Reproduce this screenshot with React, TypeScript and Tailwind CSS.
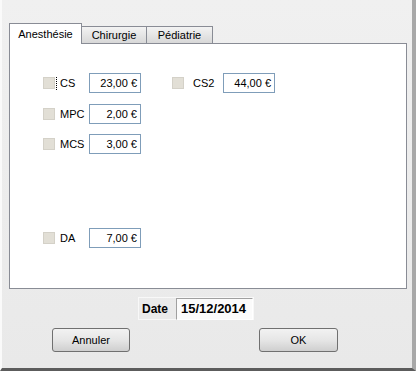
import * as React from "react"

const font = { fontFamily: '"Liberation Sans", Arial, sans-serif' }

function Check({ focused }: { focused?: boolean }) {
  return (
    <div className="flex items-center">
      <div className="w-[12px] h-[12px] border border-[#d4d1c8] bg-[#e2dfd6]" />
      {focused && <div className="w-px h-[13px] ml-px border-l border-dotted border-black" />}
    </div>
  )
}

function Amount({ value }: { value: string }) {
  return (
    <div className="w-[52px] h-[20px] border border-[#7f9db9] bg-white text-right pr-[3px] leading-[18px] text-[11px] text-black">
      {value}
    </div>
  )
}

function Row({
  label,
  value,
  focused,
  className = "",
  children,
}: {
  label: string
  value: string
  focused?: boolean
  className?: string
  children?: React.ReactNode
}) {
  return (
    <div className={`flex items-center h-[20px] ${className}`}>
      <div className="w-[12px] flex items-center">
        <Check focused={focused} />
      </div>
      <div className="ml-[5px] w-[29px] text-[11px] text-black">{label}</div>
      <Amount value={value} />
      {children}
    </div>
  )
}

export default function App() {
  return (
    <div
      style={font}
      className="w-[416px] h-[371px] flex flex-col bg-gradient-to-b from-[#f0f0f0] to-[#e9e9e9] border-l-2 border-l-[#fafafa] border-r-4 border-r-[#a8a8a8] border-b-[3px] border-b-[#5c5c5c] select-none"
    >
      {/* Tabs */}
      <div className="flex items-end h-[20px] mt-[23px] ml-[7px]">
        <div className="relative z-10 -mb-px w-[73px] h-[21px] border-l border-t border-r border-[#898c95] bg-white flex items-center justify-center text-[11px] text-black">
          Anesthésie
        </div>
        <div className="w-[65px] h-[17px] border-t border-r border-[#898c95] bg-gradient-to-b from-[#f3f3f3] to-[#d8d8d8] flex items-center justify-center text-[11px] text-black">
          Chirurgie
        </div>
        <div className="w-[66px] h-[17px] border-t border-r border-[#898c95] bg-gradient-to-b from-[#f3f3f3] to-[#d8d8d8] flex items-center justify-center text-[11px] text-black">
          Pédiatrie
        </div>
      </div>

      {/* Tab page */}
      <div className="ml-[7px] w-[398px] h-[246px] border border-[#898c95] bg-white pl-[33px] pt-[29px] flex flex-col">
        <Row label="CS" value="23,00 €" focused>
          <div className="ml-[31px] flex items-center">
            <Check />
            <div className="ml-[9px] w-[30px] text-[11px] text-black">CS2</div>
            <Amount value="44,00 €" />
          </div>
        </Row>
        <Row label="MPC" value="2,00 €" className="mt-[11px]" />
        <Row label="MCS" value="3,00 €" className="mt-[10px]" />
        <Row label="DA" value="7,00 €" className="mt-[74px]" />
      </div>

      {/* Date */}
      <div className="mt-[8px] ml-[136px] w-[116px] h-[23px] flex items-center border border-[#f8f8f8]">
        <div className="pl-[3px] w-[37px] text-[12px] font-bold text-black">Date</div>
        <div className="h-[22px] w-[77px] border-t border-l border-t-[#a0a0a0] border-l-[#a0a0a0] border-b border-r border-b-white border-r-white bg-[#fbfbfb] pl-[4px] leading-[20px] text-[13px] font-bold text-black">
          15/12/2014
        </div>
      </div>

      {/* Buttons */}
      <div className="mt-[8px] flex">
        <button className="ml-[50px] w-[78px] h-[24px] rounded-[3px] border border-[#707070] bg-gradient-to-b from-[#f2f2f2] via-[#e6e6e6] to-[#cfcfcf] text-[11px] text-black">
          Annuler
        </button>
        <button className="ml-[129px] w-[79px] h-[24px] rounded-[3px] border border-[#707070] bg-gradient-to-b from-[#f2f2f2] via-[#e6e6e6] to-[#cfcfcf] text-[11px] text-black">
          OK
        </button>
      </div>
    </div>
  )
}
